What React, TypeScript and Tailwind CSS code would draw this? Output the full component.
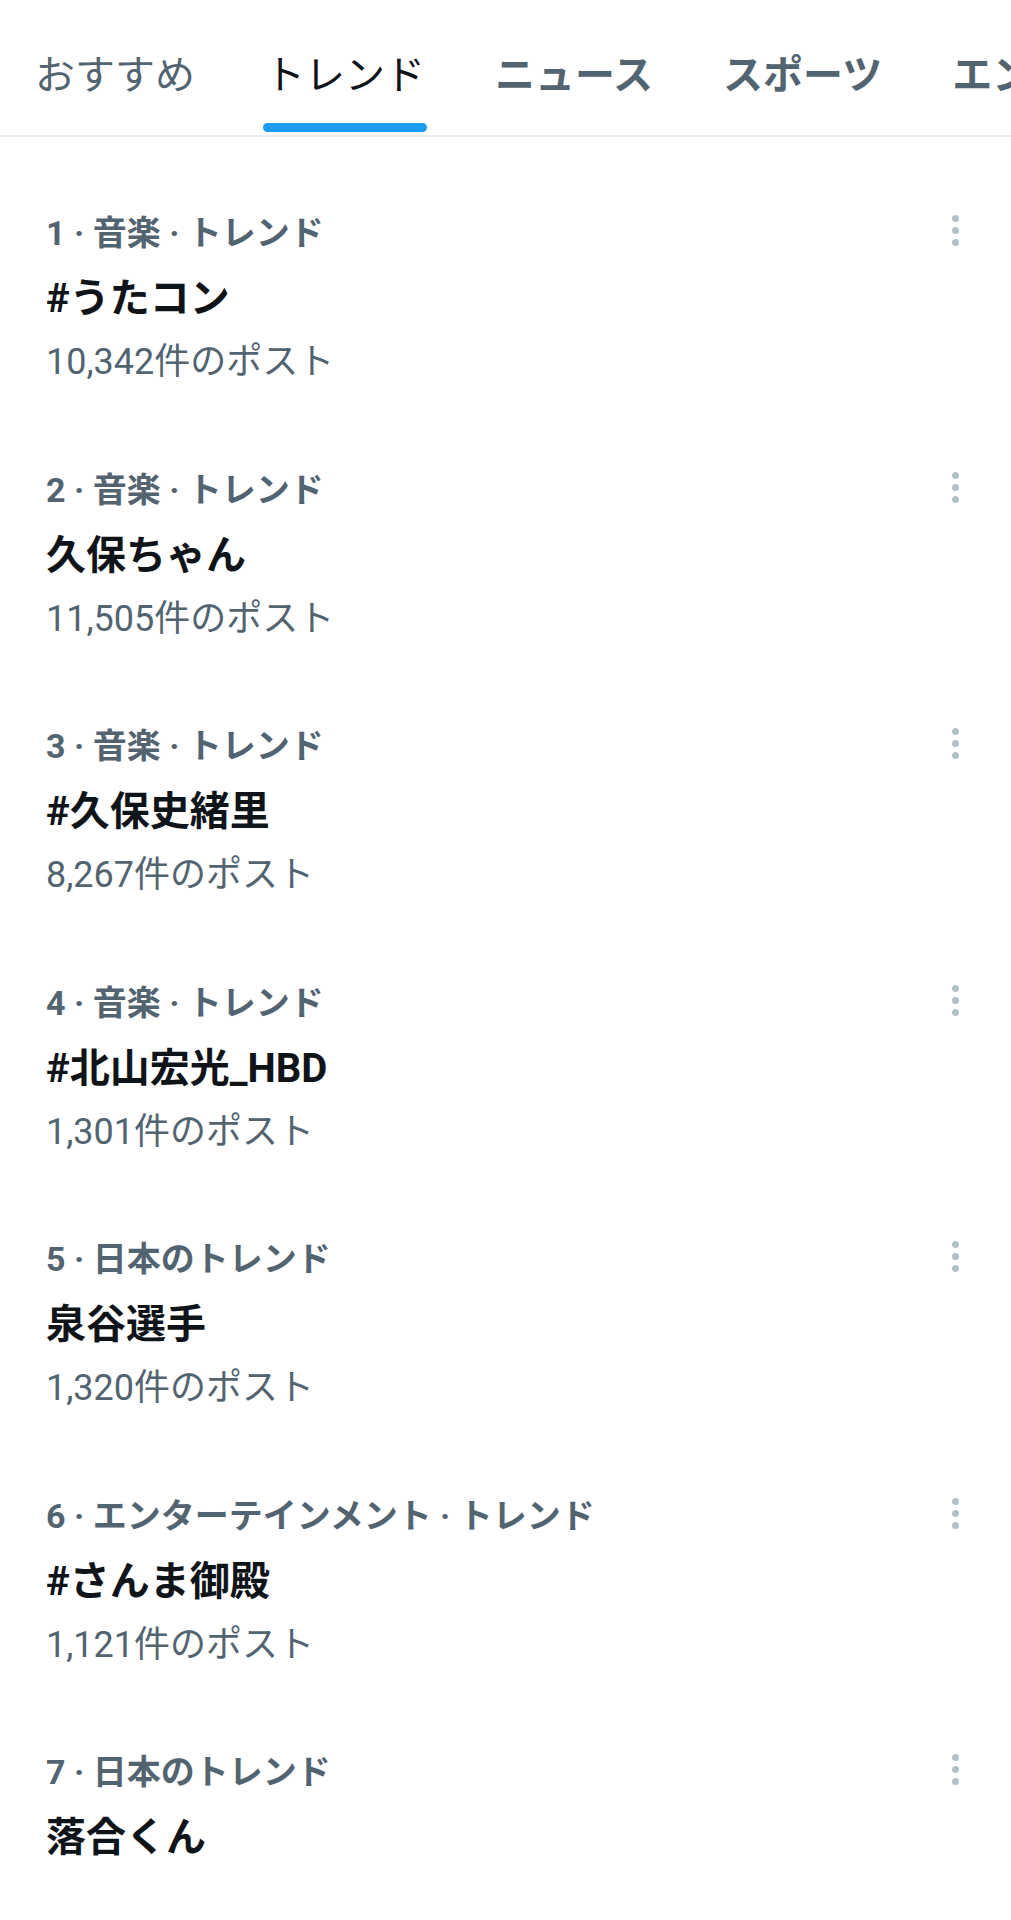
import React from 'react'

const tabs = [
  { label: 'おすすめ', style: 'font-normal text-[#536471]' },
  { label: 'トレンド', style: 'font-normal text-[#0f1419]', active: true },
  { label: 'ニュース', style: 'font-bold text-[#536471]' },
  { label: 'スポーツ', style: 'font-bold text-[#536471]' },
  { label: 'エンターテイメント', style: 'font-bold text-[#536471]' },
]

const trends = [
  { rank: 1, category: '音楽 · トレンド', title: '#うたコン', count: '10,342件のポスト' },
  { rank: 2, category: '音楽 · トレンド', title: '久保ちゃん', count: '11,505件のポスト' },
  { rank: 3, category: '音楽 · トレンド', title: '#久保史緒里', count: '8,267件のポスト' },
  { rank: 4, category: '音楽 · トレンド', title: '#北山宏光_HBD', count: '1,301件のポスト' },
  { rank: 5, category: '日本のトレンド', title: '泉谷選手', count: '1,320件のポスト' },
  { rank: 6, category: 'エンターテインメント · トレンド', title: '#さんま御殿', count: '1,121件のポスト' },
  { rank: 7, category: '日本のトレンド', title: '落合くん', count: '' },
]

function MoreDots() {
  return (
    <div className="flex flex-col items-center gap-[5px] pt-[4px]">
      <span className="w-[7px] h-[7px] rounded-full bg-[#b4c0c8]" />
      <span className="w-[7px] h-[7px] rounded-full bg-[#b4c0c8]" />
      <span className="w-[7px] h-[7px] rounded-full bg-[#b4c0c8]" />
    </div>
  )
}

export default function App() {
  return (
    <div
      className="w-[1011px] min-h-[1920px] bg-white overflow-hidden"
      style={{ fontFamily: 'Roboto, "Noto Sans CJK JP", sans-serif' }}
    >
      {/* tab bar */}
      <nav className="flex h-[137px] border-b-[2px] border-[#e7ecef] whitespace-nowrap overflow-hidden">
        {tabs.map((tab) => (
          <div key={tab.label} className="relative flex items-center shrink-0 px-[35px] pt-[16px]">
            <span className={`text-[40px] leading-none ${tab.style}`}>{tab.label}</span>
            {tab.active && (
              <span className="absolute left-[33px] right-[33px] bottom-[3px] h-[9px] rounded-full bg-[#1d9bf0]" />
            )}
          </div>
        ))}
      </nav>

      {/* trends */}
      <div className="pt-[38px]">
        {trends.map((t) => (
          <div key={t.rank} className="flex justify-between pl-[46px] pr-[52px] pt-[36px] pb-[47.5px]">
            <div className="flex flex-col">
              <p className="text-[34px] leading-[44px] font-bold text-[#536471]">
                {t.rank} · {t.category}
              </p>
              <p className="mt-[18px] text-[40px] leading-[52px] font-bold text-[#0f1419]">{t.title}</p>
              <p className="mt-[15px] text-[36px] leading-[44px] text-[#536471]">{t.count}</p>
            </div>
            <MoreDots />
          </div>
        ))}
      </div>
    </div>
  )
}
